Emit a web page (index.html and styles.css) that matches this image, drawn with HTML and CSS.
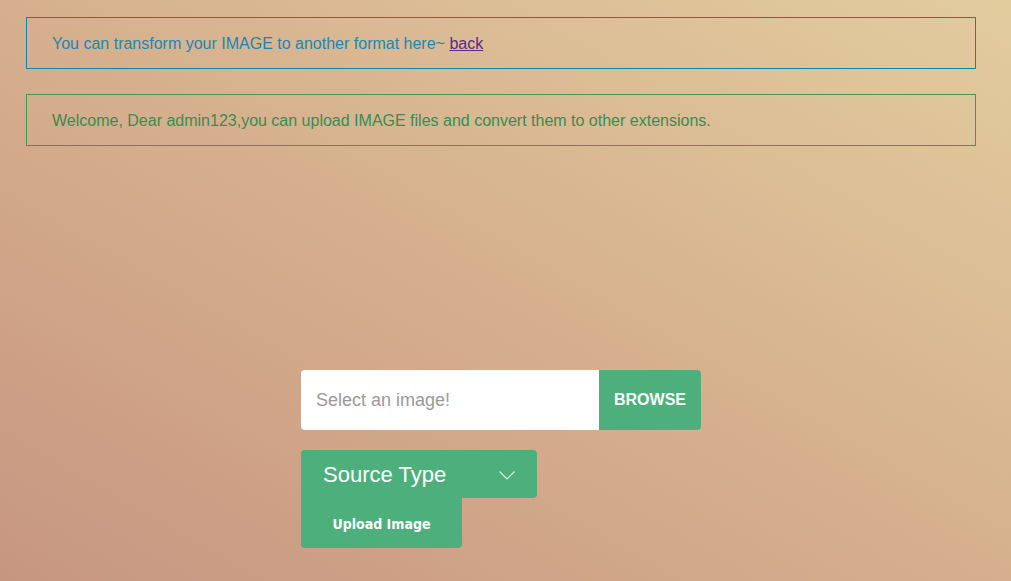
FILE: index.html
```html
<!DOCTYPE html>
<html>
<head>
<meta charset="utf-8">
<title>Image Transform</title>
<link rel="stylesheet" href="styles.css">
</head>
<body>
<div class="page">
  <div class="notice notice-info"><p class="notice-text">You can transform your IMAGE to another format here~ <a href="#" class="back">back</a></p></div>
  <div class="notice notice-success"><p class="notice-text">Welcome, Dear admin123,you can upload IMAGE files and convert them to other extensions.</p></div>
  <form class="upload-form">
    <div class="file-row">
      <input class="file-input" type="text" placeholder="Select an image!">
      <button type="button" class="browse">BROWSE</button>
    </div>
    <div class="select-box">
      <span class="select-label">Source Type</span>
      <svg class="chevron" width="16" height="9" viewBox="0 0 16 9"><path d="M0.5 0.5 L8 8 L15.5 0.5" fill="none" stroke="#d8efe2" stroke-width="1.2"/></svg>
    </div>
    <button type="button" class="upload">Upload Image</button>
  </form>
</div>
</body>
</html>
```
FILE: styles.css
```css
html, body {
  margin: 0;
  height: 100%;
}
body {
  background: linear-gradient(to top right, #c79681 0%, #d6b08e 50%, #e2cc9e 100%);
  font-family: "Liberation Sans", Arial, sans-serif;
  min-height: 581px;
}
.page {
  padding: 17px 35px 0 26px;
  display: flex;
  flex-direction: column;
  gap: 25px;
}
.notice {
  height: 50px;
  border: 1px solid;
  padding: 0 25px;
  display: flex;
  align-items: center;
  font-size: 16px;
}
.notice-text {
  margin: 2px 0 0;
}
.notice-info {
  border-color: #0b87ad;
  color: #1a87b2;
}
.notice-success {
  border-color: #3a9c5c;
  color: #3b8b52;
}
.back {
  color: #5c2a86;
  text-decoration: underline;
}
.upload-form {
  margin-top: 199px;
  align-self: center;
  width: 400px;
  display: flex;
  flex-direction: column;
}
.file-row {
  display: flex;
  height: 60px;
  border-radius: 4px;
  overflow: hidden;
}
.file-input {
  flex: 1;
  border: none;
  outline: none;
  background: #fff;
  padding: 0 15px;
  font-family: "Liberation Sans", Arial, sans-serif;
  font-size: 18px;
  color: #555;
}
.file-input::placeholder {
  color: #9a9a9a;
}
.browse {
  width: 102px;
  border: none;
  background: #4daf7c;
  color: #fff;
  font-family: "Liberation Sans", Arial, sans-serif;
  font-weight: bold;
  font-size: 16px;
  padding: 0;
}
.select-box {
  margin-top: 20px;
  width: 236px;
  height: 48px;
  box-sizing: border-box;
  background: #4daf7c;
  border-radius: 4px 4px 4px 0;
  display: flex;
  align-items: center;
  justify-content: space-between;
  padding: 0 22px 0 22px;
  color: #fff;
}
.select-label {
  font-size: 22px;
  margin-top: 2px;
}
.chevron {
  display: block;
  margin-top: 2px;
}
.upload {
  width: 161px;
  height: 50px;
  border: none;
  background: #4daf7c;
  color: #fff;
  border-radius: 0 0 4px 4px;
  font-family: "DejaVu Sans Condensed", "DejaVu Sans", Verdana, sans-serif;
  font-weight: bold;
  font-size: 14px;
  padding: 2px 0 0;
}
```
